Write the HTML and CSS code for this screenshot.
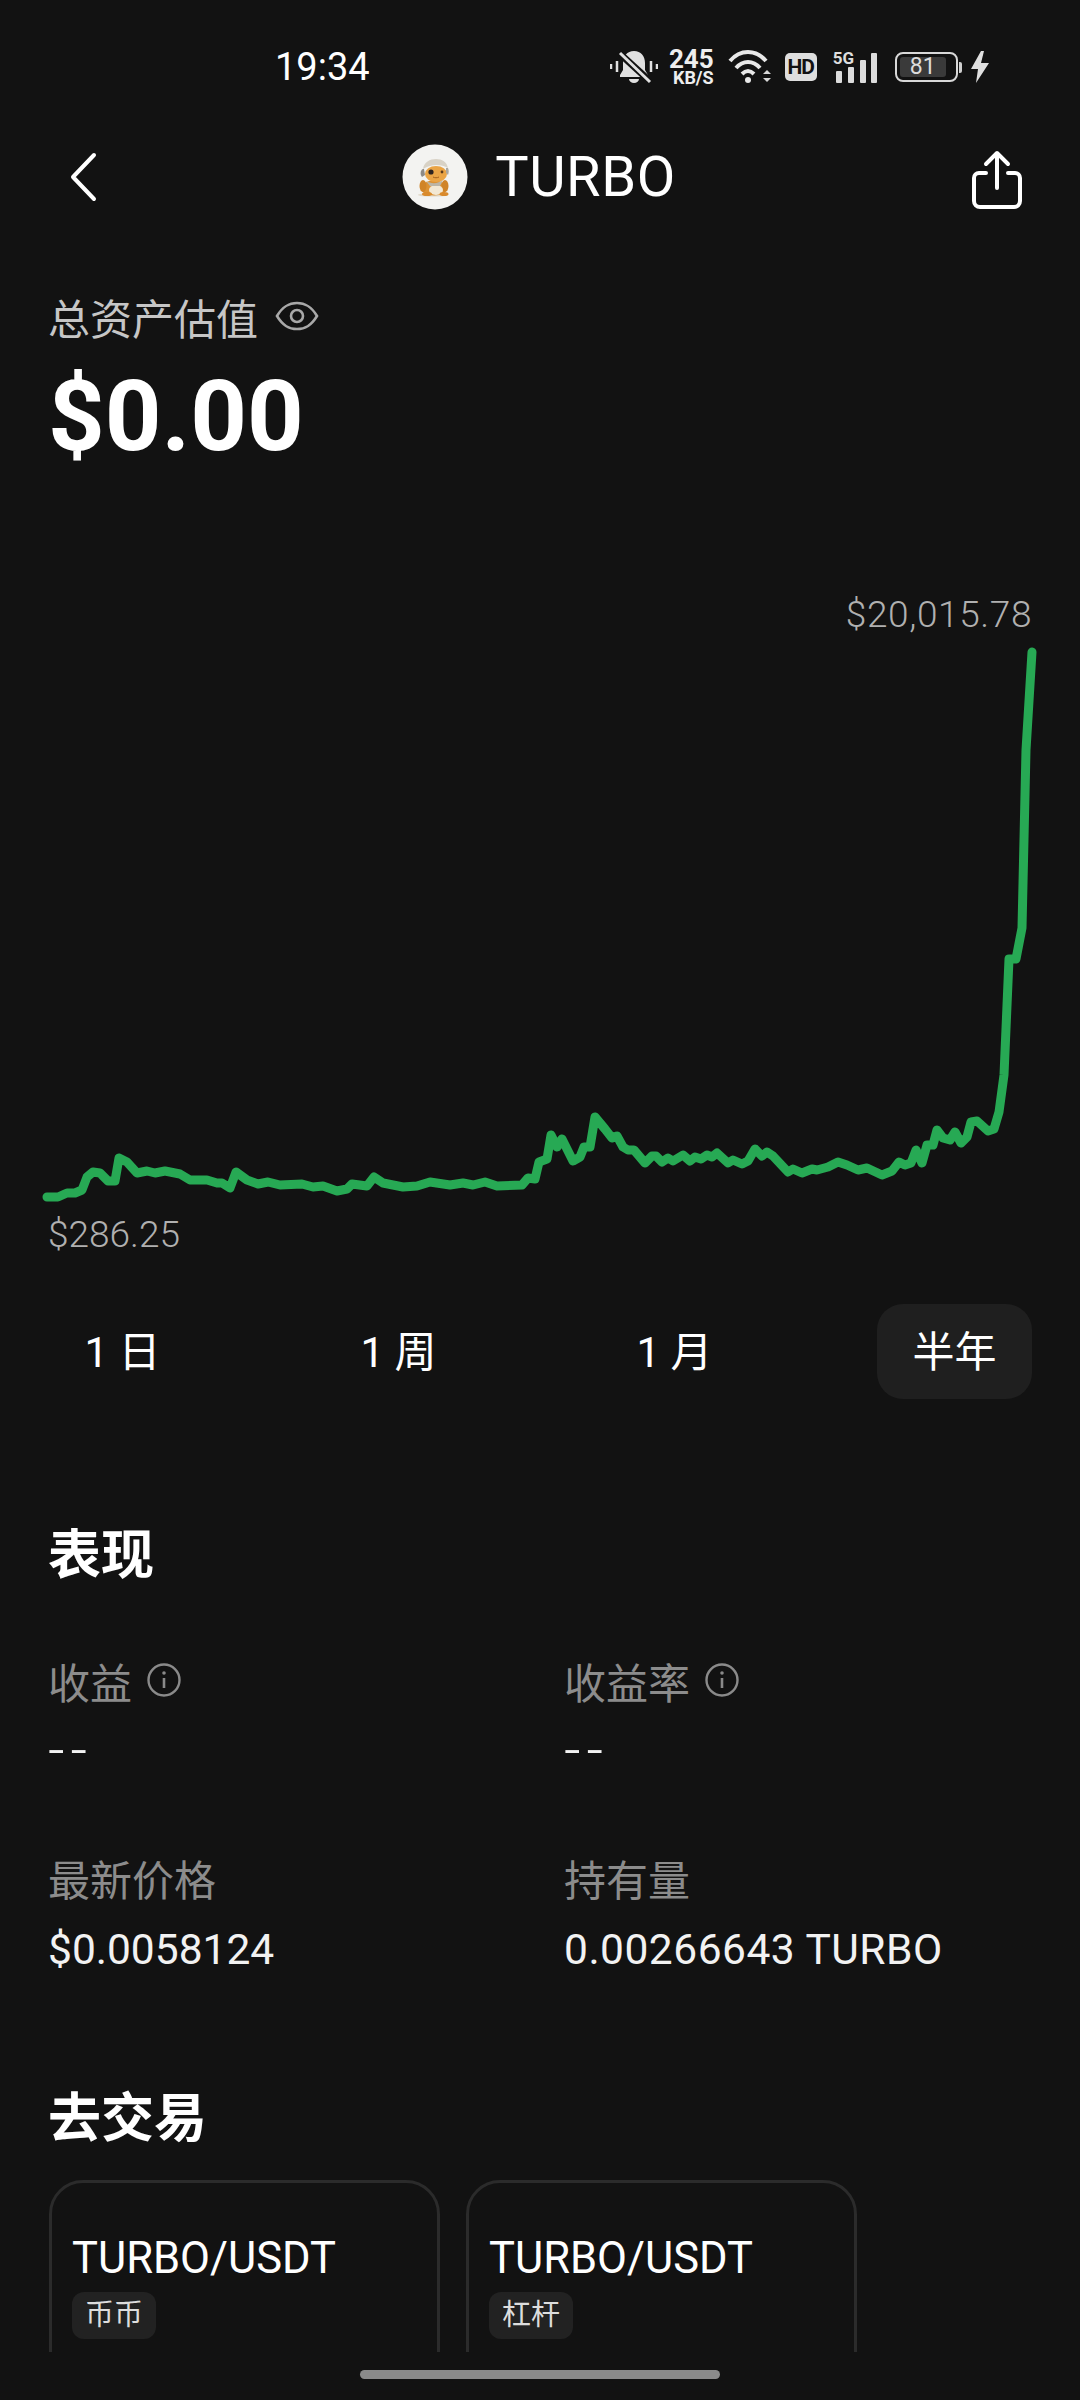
FILE: index.html
```html
<!DOCTYPE html>
<html lang="zh-CN">
<head>
    <meta charset="UTF-8">
    <meta name="viewport" content="width=device-width, initial-scale=1.0">
    <title>TURBO</title>
    <link rel="stylesheet" href="styles.css">
</head>
<body>
    <div class="status-bar">
        <span class="status-time">19:34</span>
        <div class="status-icons">
            <svg class="icon-bell" width="48" height="34" viewBox="0 0 48 34">
                <path d="M24 1c-7 0-11 5-11 12v7l-3 5v2h28v-2l-3-5v-7c0-7-4-12-11-12z" fill="#e0e0e0"/>
                <path d="M19 29a5 4 0 0 0 10 0z" fill="#e0e0e0"/>
                <path d="M8 2l34 31" stroke="#121212" stroke-width="7"/>
                <path d="M10 3l30 29" stroke="#e0e0e0" stroke-width="3"/>
                <path d="M1 14v5M7 11v11M41 11v11M47 14v5" stroke="#e0e0e0" stroke-width="2.5"/>
            </svg>
            <div class="net-speed">
                <span class="net-num">245</span>
                <span class="net-unit">KB/S</span>
            </div>
            <svg class="icon-wifi" width="44" height="34" viewBox="0 0 44 34">
                <path d="M2 11c10-12 26-12 36 0" fill="none" stroke="#e8e8e8" stroke-width="4"/>
                <path d="M8 18c7-8 17-8 24 0" fill="none" stroke="#e8e8e8" stroke-width="4"/>
                <path d="M14 24c4-4 8-4 12 0" fill="none" stroke="#e8e8e8" stroke-width="4"/>
                <circle cx="20" cy="30" r="3" fill="#e8e8e8"/>
                <path d="M35 24l4-4 4 4zM35 28l4 4 4-4z" fill="#d8d8d8"/>
            </svg>
            <span class="hd-badge">HD</span>
            <div class="signal">
                <span class="signal-label">5G</span>
                <svg width="44" height="31" viewBox="0 0 44 31">
                    <rect x="3" y="19" width="6" height="12" rx="1" fill="#dcdcdc"/>
                    <rect x="15" y="15" width="6" height="16" rx="1" fill="#dcdcdc"/>
                    <rect x="27" y="8" width="6" height="23" rx="1" fill="#dcdcdc"/>
                    <rect x="38" y="1" width="6" height="30" rx="1" fill="#dcdcdc"/>
                </svg>
            </div>
            <div class="battery">
                <div class="battery-body">
                    <span class="battery-level">81</span>
                </div>
                <span class="battery-tip"></span>
            </div>
            <svg class="icon-bolt" width="20" height="32" viewBox="0 0 20 32">
                <path d="M11 0L1 18h7l-2 14L19 12h-8l3-12z" fill="#e0e0e0"/>
            </svg>
        </div>
    </div>

    <div class="nav-bar">
        <svg class="nav-icon" width="30" height="50" viewBox="0 0 30 50">
            <path d="M26 3L5 25l21 22" fill="none" stroke="#fff" stroke-width="4" stroke-linecap="round" stroke-linejoin="round"/>
        </svg>
        <div class="nav-title">
            <svg class="coin" width="66" height="66" viewBox="0 0 66 66">
                <circle cx="33" cy="33" r="32.5" fill="#f3f3f1"/>
                <ellipse cx="31" cy="51" rx="15" ry="1.6" fill="#e0d8c8"/>
                <ellipse cx="32" cy="44" rx="13" ry="7.5" fill="#dc9234"/>
                <ellipse cx="21" cy="42" rx="3.5" ry="6" fill="#d08428"/>
                <ellipse cx="43" cy="42" rx="3.5" ry="6" fill="#d08428"/>
                <ellipse cx="34" cy="46" rx="7" ry="5" fill="#f2e8d4"/>
                <ellipse cx="25" cy="50" rx="5" ry="2" fill="#d98a2c"/>
                <ellipse cx="42" cy="50" rx="4.5" ry="2" fill="#d98a2c"/>
                <path d="M24 37c5 3 12 3 17-1l-3 6h-10z" fill="#bcb5a6"/>
                <ellipse cx="34" cy="30" rx="11" ry="8" fill="#eaa445"/>
                <path d="M21 25c1-7 7-10 13-10s11 3 12 9c-7-4-17-4-25 1z" fill="#d8d2c6"/>
                <path d="M21 25c-3 1-3 6-1 8l3-2-1-6z" fill="#8d8a86"/>
                <path d="M46 24c1 2 1 5 0 7l-2-2v-5z" fill="#aaa69f"/>
                <circle cx="29" cy="28" r="2.6" fill="#2c2320"/>
                <circle cx="40" cy="28" r="1.4" fill="#5a3a1c"/>
                <path d="M31 33c2 1 4 1 6 0" fill="none" stroke="#a4601c" stroke-width="1"/>
            </svg>
            <span class="nav-name">TURBO</span>
        </div>
        <svg class="nav-icon" width="50" height="64" viewBox="0 -6 50 64">
            <path d="M25 37V3M14 13L25 2l11 11" fill="none" stroke="#fff" stroke-width="4" stroke-linecap="round" stroke-linejoin="round"/>
            <path d="M14 22H7a5 5 0 0 0-5 5v23a6 6 0 0 0 6 6h34a6 6 0 0 0 6-6V27a5 5 0 0 0-5-5h-7" fill="none" stroke="#fff" stroke-width="4" stroke-linecap="round"/>
        </svg>
    </div>

    <div class="summary">
        <div class="summary-label">
            <span>总资产估值</span>
            <svg width="44" height="32" viewBox="0 0 44 32">
                <path d="M2 16C8 6 14 3 22 3s14 3 20 13c-6 10-12 13-20 13S8 26 2 16z" fill="none" stroke="#a8a8a8" stroke-width="2.6"/>
                <circle cx="22" cy="16" r="6" fill="none" stroke="#a8a8a8" stroke-width="2.6"/>
            </svg>
        </div>
        <div class="summary-value">$0.00</div>
    </div>

    <div class="chart">
        <div class="chart-high">$20,015.78</div>
        <svg class="chart-line" width="1080" height="570" viewBox="0 640 1080 570">
            <polyline fill="none" stroke="#27a954" stroke-width="9" stroke-linecap="round" stroke-linejoin="round"
                points="47,1197 58,1197 67,1193 75,1193 82,1190 87,1177 93,1172 100,1173 108,1181 115,1181 119,1158 127,1162 137,1173 147,1171 155,1173 165,1171 180,1174 190,1180 207,1180 217,1183 222,1183 230,1188 236,1172 247,1180 258,1184 268,1182 280,1185 302,1184 313,1187 323,1186 337,1191 347,1189 352,1184 367,1186 374,1177 383,1183 403,1187 417,1186 430,1182 450,1185 463,1183 473,1185 485,1182 497,1186 522,1185 528,1178 535,1179 539,1162 547,1159 551,1135 557,1147 562,1139 573,1161 580,1157 584,1147 590,1147 595,1117 605,1129 612,1138 617,1136 623,1147 628,1150 634,1150 645,1163 652,1156 656,1156 662,1162 668,1158 673,1161 683,1155 690,1161 695,1157 701,1159 707,1155 712,1157 717,1153 728,1163 733,1160 742,1164 748,1161 755,1149 762,1156 767,1152 773,1156 788,1172 793,1169 802,1173 812,1169 817,1170 828,1167 838,1162 847,1165 858,1170 867,1168 882,1175 892,1171 899,1162 905,1165 911,1163 916,1150 922,1163 927,1145 933,1145 937,1130 943,1138 950,1140 955,1132 961,1143 967,1137 971,1122 977,1121 988,1131 994,1129 999,1112 1004,1075 1009,959 1016,959 1022,928 1026,750 1032,652"/>
        </svg>
        <div class="chart-low">$286.25</div>
    </div>

    <div class="tabs">
        <div class="tab">1 日</div>
        <div class="tab">1 周</div>
        <div class="tab">1 月</div>
        <div class="tab active">半年</div>
    </div>

    <h2 class="section-title perf-title">表现</h2>
    <div class="stats">
        <div class="stat-label">
            <span>收益</span>
            <svg class="info" width="36" height="36" viewBox="0 0 36 36">
                <circle cx="18" cy="18" r="15.5" fill="none" stroke="#8a8a8a" stroke-width="2.4"/>
                <path d="M18 16v10" stroke="#8a8a8a" stroke-width="2.6"/>
                <circle cx="18" cy="11" r="1.8" fill="#8a8a8a"/>
            </svg>
        </div>
        <div class="stat-label">
            <span>收益率</span>
            <svg class="info" width="36" height="36" viewBox="0 0 36 36">
                <circle cx="18" cy="18" r="15.5" fill="none" stroke="#8a8a8a" stroke-width="2.4"/>
                <path d="M18 16v10" stroke="#8a8a8a" stroke-width="2.6"/>
                <circle cx="18" cy="11" r="1.8" fill="#8a8a8a"/>
            </svg>
        </div>
        <div class="stat-value dashes">--</div>
        <div class="stat-value dashes">--</div>
        <div class="stat-label row-two">最新价格</div>
        <div class="stat-label row-two">持有量</div>
        <div class="stat-value tight">$0.0058124</div>
        <div class="stat-value tight holding">0.00266643 TURBO</div>
    </div>

    <h2 class="section-title trade-title">去交易</h2>
    <div class="market-row">
        <div class="market-card">
            <div class="market-pair">TURBO/USDT</div>
            <span class="market-tag">币币</span>
        </div>
        <div class="market-card">
            <div class="market-pair">TURBO/USDT</div>
            <span class="market-tag">杠杆</span>
        </div>
    </div>
    <div class="home-bar"></div>
</body>
</html>
```

FILE: styles.css
```css
* {
    box-sizing: border-box;
}
html, body {
    margin: 0;
    padding: 0;
}
body {
    width: 1080px;
    height: 2400px;
    overflow: hidden;
    background-color: #121212;
    color: #fff;
    font-family: Roboto, "Noto Sans CJK SC", sans-serif;
}

/* status bar */
.status-bar {
    display: flex;
    align-items: center;
    height: 70px;
    margin-top: 32px;
    padding-left: 275px;
}
.status-time {
    font-size: 38px;
    color: #fff;
}
.status-icons {
    display: flex;
    align-items: center;
    margin-left: 240px;
}
.net-speed {
    display: flex;
    flex-direction: column;
    align-items: flex-end;
    width: 44px;
    margin-left: 12px;
    font-weight: 700;
    color: #eee;
}
.net-num {
    font-size: 26px;
    line-height: 22px;
}
.net-unit {
    font-size: 18px;
    line-height: 16px;
}
.icon-wifi {
    margin-left: 14px;
}
.hd-badge {
    width: 32px;
    height: 28px;
    margin-left: 13px;
    border-radius: 5px;
    background-color: #dedede;
    color: #121212;
    font-size: 21px;
    font-weight: 700;
    line-height: 28px;
    text-align: center;
    letter-spacing: -1px;
}
.signal {
    position: relative;
    width: 46px;
    height: 31px;
    margin-left: 16px;
}
.signal-label {
    position: absolute;
    left: 0;
    top: -2px;
    font-size: 17px;
    font-weight: 700;
    line-height: 16px;
    color: #dedede;
}
.signal svg {
    display: block;
}
.battery {
    display: flex;
    align-items: center;
    margin-left: 16px;
}
.battery-body {
    width: 63px;
    height: 30px;
    padding: 3px;
    border: 2px solid #d8d8d8;
    border-radius: 8px;
}
.battery-level {
    display: block;
    width: 46px;
    height: 20px;
    border-radius: 3px;
    background-color: #3a3a3a;
    color: #dcdcdc;
    font-size: 23px;
    line-height: 20px;
    text-align: center;
}
.battery-tip {
    width: 3px;
    height: 11px;
    margin-left: 1px;
    border-radius: 0 2px 2px 0;
    background-color: #d0d0d0;
}
.icon-bolt {
    margin-left: 8px;
}

/* top nav */
.nav-bar {
    display: flex;
    align-items: center;
    justify-content: space-between;
    height: 70px;
    margin-top: 40px;
    padding: 0 58px 0 68px;
}
.nav-title {
    display: flex;
    align-items: center;
    gap: 27px;
    margin-left: 8px;
}
.nav-name {
    font-size: 56px;
    font-weight: 400;
    letter-spacing: 0.6px;
}
.nav-icon, .coin {
    display: block;
}

/* total value */
.summary {
    margin-top: 79px;
    padding-left: 48px;
}
.summary-label {
    display: flex;
    align-items: center;
    gap: 17px;
    height: 50px;
    font-size: 42px;
    color: #c6c6c6;
}
.summary-value {
    margin-top: 20px;
    font-size: 99px;
    font-weight: 700;
    line-height: 110px;
}

/* chart */
.chart {
    margin-top: 119px;
}
.chart-line {
    display: block;
}
.chart-high, .chart-low {
    height: 50px;
    font-size: 37px;
    font-weight: 300;
    line-height: 50px;
    color: #b0b0b0;
}
.chart-high {
    padding-right: 48px;
    text-align: right;
    letter-spacing: 0.6px;
}
.chart-low {
    padding-left: 48px;
}

/* range tabs */
.tabs {
    display: flex;
    gap: 121px;
    margin-top: 44px;
    padding: 0 48px 0 45px;
}
.tab {
    width: 155px;
    height: 95px;
    font-size: 42px;
    line-height: 98px;
    text-align: center;
}
.tab.active {
    margin-left: auto;
    border-radius: 26px;
    background-color: #1f1f1f;
}

/* sections */
.section-title {
    height: 70px;
    margin: 0;
    padding-left: 48px;
    font-size: 53px;
    font-weight: 700;
    line-height: 70px;
}
.perf-title {
    margin-top: 122px;
}
.trade-title {
    margin-top: 109px;
}
.stats {
    display: grid;
    grid-template-columns: 516px 1fr;
    margin-top: 64px;
    padding-left: 48px;
}
.stat-label {
    display: flex;
    align-items: center;
    gap: 14px;
    height: 50px;
    font-size: 42px;
    color: #8c8c8c;
}
.row-two {
    margin-top: 77px;
}
.stat-value {
    height: 50px;
    margin-top: 20px;
    font-size: 42.5px;
    line-height: 50px;
    color: #f2f2f2;
}
.stat-value.tight {
    margin-top: 23px;
}
.stat-value.holding {
    letter-spacing: 0.5px;
}
.stat-value.dashes {
    font-size: 58px;
    font-weight: 300;
    letter-spacing: 6px;
}

/* market cards, cut off by the fold */
.market-row {
    display: flex;
    gap: 26px;
    height: 172px;
    margin-top: 26px;
    padding-left: 49px;
    overflow: hidden;
}
.market-card {
    flex: none;
    width: 391px;
    height: 260px;
    padding: 51px 20px 0;
    border: 3px solid #2b2b2b;
    border-radius: 34px;
}
.market-pair {
    height: 50px;
    font-size: 43.5px;
    line-height: 50px;
}
.market-tag {
    display: inline-block;
    width: 84px;
    height: 47px;
    margin-top: 8px;
    border-radius: 12px;
    background-color: #222;
    color: #ddd;
    font-size: 29px;
    line-height: 47px;
    text-align: center;
}
.home-bar {
    width: 360px;
    height: 9px;
    margin: 18px auto 0;
    border-radius: 5px;
    background-color: #8a8a8a;
}
```
